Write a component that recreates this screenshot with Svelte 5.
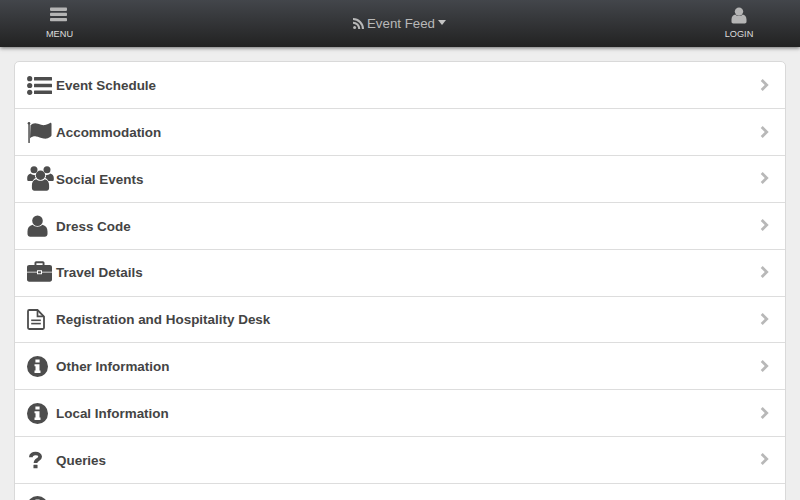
<script>
  const rows = [
    { label: 'Event Schedule', icon: 'list' },
    { label: 'Accommodation', icon: 'flag' },
    { label: 'Social Events', icon: 'group' },
    { label: 'Dress Code', icon: 'user' },
    { label: 'Travel Details', icon: 'case' },
    { label: 'Registration and Hospitality Desk', icon: 'doc' },
    { label: 'Other Information', icon: 'info' },
    { label: 'Local Information', icon: 'info' },
    { label: 'Queries', icon: 'question' },
    { label: '', icon: 'info' }
  ];
</script>

<header class="topbar">
  <button class="nav-btn">
    <svg class="menu-icon" width="17" height="15" viewBox="0 0 17 15">
      <rect y="0.500" width="17" height="3.400" rx="0.800" />
      <rect y="5.700" width="17" height="3.400" rx="0.800" />
      <rect y="10.900" width="17" height="3.400" rx="0.800" />
    </svg>
    <span>MENU</span>
  </button>

  <div class="title">
    <svg width="11" height="11" viewBox="0 0 11 11">
      <circle cx="1.600" cy="9.400" r="1.500" />
      <path d="M0 3.700v2.100a5.200 5.200 0 0 1 5.200 5.200h2.100A7.300 7.300 0 0 0 0 3.700z" />
      <path d="M0 0v2.100A8.900 8.900 0 0 1 8.900 11H11A11 11 0 0 0 0 0z" />
    </svg>
    <span>Event Feed</span>
    <i class="caret"></i>
  </div>

  <button class="nav-btn">
    <svg width="16" height="17" viewBox="0 0 16 17">
      <circle cx="8" cy="4.600" r="4.200" />
      <path d="M4.400 7.600C2.200 8.200.5 9.600.5 12.500v2.300c0 1 .8 1.700 1.700 1.700h11.600c.9 0 1.700-.7 1.700-1.700v-2.300c0-2.900-1.700-4.300-3.900-4.900-.9 1-2.100 1.500-3.600 1.500s-2.700-.5-3.600-1.500z" />
    </svg>
    <span>LOGIN</span>
  </button>
</header>

<main class="content">
  <ul class="list">
    {#each rows as row}
      <li class="row">
        <span class="icon">
          {#if row.icon === 'list'}
            <svg width="25" height="19" viewBox="0 0 25 19">
              <circle cx="2.700" cy="2.700" r="2.600" />
              <circle cx="2.700" cy="9.500" r="2.600" />
              <circle cx="2.700" cy="16.300" r="2.600" />
              <rect x="7" y="1" width="18" height="3.400" rx="0.500" />
              <rect x="7" y="7.800" width="18" height="3.400" rx="0.500" />
              <rect x="7" y="14.600" width="18" height="3.400" rx="0.500" />
            </svg>
          {:else if row.icon === 'flag'}
            <svg width="25" height="21" viewBox="0 0 25 21">
              <rect x="1.300" y="1" width="1.500" height="20" rx="0.500" />
              <circle cx="2" cy="1.300" r="1.300" />
              <path d="M3.500 3.300C5.500 1.300 8 .8 11 1.800c3 1.100 5 1.800 7 1.300 2.500-.6 4-1.500 5-2.100.8-.4 1.500 0 1.500.9v11.300c0 .7-.4 1.100-1 1.500-2.200 1.600-4.600 2.300-7 1.800-2.700-.5-5-1.900-7.500-2.100-2.200-.2-4.200.4-6 1.900z" />
            </svg>
          {:else if row.icon === 'group'}
            <svg width="27" height="25" viewBox="0 0 27 25">
              <circle cx="7" cy="3.800" r="3.500" />
              <circle cx="20" cy="3.800" r="3.500" />
              <circle cx="13.500" cy="9.300" r="4.700" />
              <path d="M3.500 7.800C1.300 8.300.2 9.800.2 12v1.500c0 1 .7 1.500 1.500 1.500h3.800c1.200-1.500 2-2.300 3.300-2.900-.6-1-1-2.100-1-3.200-.2 0-.5.100-.8.100-1.500 0-2.700-.5-3.500-1.700z" />
              <path d="M23.500 7.800c2.200.5 3.300 2 3.300 4.200v1.500c0 1-.7 1.500-1.500 1.500h-3.800c-1.200-1.500-2-2.300-3.300-2.900.6-1 1-2.100 1-3.200.2 0 .5.100.8.100 1.500 0 2.700-.5 3.500-1.700z" />
              <path d="M9.300 13.300c-3.200.7-4.400 3-4.400 6.200v2.500c0 1.500 1 2.700 2.500 2.700h12.200c1.500 0 2.500-1.200 2.500-2.700v-2.500c0-3.200-1.200-5.500-4.400-6.200-1.100 1-2.500 1.500-4.200 1.500s-3.100-.5-4.200-1.500z" />
            </svg>
          {:else if row.icon === 'user'}
            <svg width="21" height="22" viewBox="0 0 21 22">
              <circle cx="10.500" cy="5.700" r="5.300" />
              <path d="M5.600 9.700C2.200 10.500.5 12.800.5 16.500v2.500c0 1.600 1.200 2.700 2.700 2.700h14.600c1.500 0 2.700-1.100 2.700-2.700v-2.500c0-3.700-1.700-6-5.100-6.800-1.200 1.300-2.900 2-4.900 2s-3.700-.7-4.900-2z" />
            </svg>
          {:else if row.icon === 'case'}
            <svg class="case" width="25" height="21" viewBox="0 0 25 21">
              <path fill-rule="evenodd" d="M7.500 4V2c0-1 .7-1.700 1.700-1.700h6.600c1 0 1.700.7 1.700 1.700v2h5.300c1.300 0 2.200.9 2.200 2.200V10.800H15V9.300H10v1.500H0V6.200C0 4.900.9 4 2.200 4zm1.900 0h6.200V2.200H9.400z" />
              <path d="M0 11.600h10v1.700h5v-1.700h10v6.900c0 1.300-.9 2.200-2.200 2.200H2.200C.9 20.700 0 19.800 0 18.500z" />
              <rect x="11" y="10.300" width="3" height="2" />
            </svg>
          {:else if row.icon === 'doc'}
            <svg width="18" height="21" viewBox="0 0 18 21">
              <path d="M1 2.200c0-.7.500-1.200 1.200-1.200h8.300L17 7.500v11.300c0 .7-.5 1.200-1.200 1.200H2.200c-.7 0-1.200-.5-1.200-1.200z" fill="none" stroke="#4d4d4d" stroke-width="1.800" />
              <path d="M10.500 1.200v6.100h6.300" fill="none" stroke="#4d4d4d" stroke-width="1.700" />
              <rect x="4.200" y="10.500" width="9.600" height="1.600" />
              <rect x="4.200" y="13.800" width="9.600" height="1.600" />
            </svg>
          {:else if row.icon === 'info'}
            <svg width="21" height="21" viewBox="0 0 21 21">
              <path fill-rule="evenodd" d="M10.500 0a10.500 10.500 0 1 1 0 21 10.500 10.500 0 0 1 0-21zM8.400 3.500v3h4.200v-3zM7.500 8.300v2h1v4.300h-1v2.500h6v-2.500h-1V8.300z" />
            </svg>
          {:else}
            <svg class="question" width="13" height="18" viewBox="0 0 14 18">
              <path d="M2 6C2 3.200 4.200 2 7 2c2.900 0 5 1.400 5 3.600C12 8.700 7 8.400 7 12.300" fill="none" stroke="#4d4d4d" stroke-width="4" />
              <rect x="4.800" y="14" width="4.400" height="4" rx="0.500" />
            </svg>
          {/if}
        </span>
        <span class="label">{row.label}</span>
        <svg class="chevron" width="9" height="12" viewBox="0 0 9 12">
          <path d="M1.700 1l5 5-5 5" fill="none" stroke="#b8b8b8" stroke-width="2.800" />
        </svg>
      </li>
    {/each}
  </ul>
</main>

<style>
  :global(html), :global(body) {
    margin: 0;
    height: 500px;
    overflow: hidden;
    background: #eeeeee;
  }

  .topbar {
    height: 47px;
    display: grid;
    grid-template-columns: 119px 1fr 122px;
    align-items: start;
    background: linear-gradient(#43464b, #222222);
    box-shadow: 0 1px 4px rgba(0, 0, 0, 0.55);
    position: relative;
    font-family: "Liberation Sans", Arial, sans-serif;
  }

  .nav-btn {
    all: unset;
    display: flex;
    flex-direction: column;
    align-items: center;
    height: 47px;
    padding-top: 7px;
    box-sizing: border-box;
    color: #dddddd;
    font-size: 9.200px;
    line-height: 12px;
  }
  .nav-btn svg {
    fill: #b5b5b5;
  }
  .nav-btn .menu-icon {
    margin-right: 1.500px;
  }
  .nav-btn span {
    margin-top: auto;
    margin-bottom: 7px;
  }

  .title {
    display: flex;
    justify-content: center;
    align-items: center;
    gap: 3px;
    height: 47px;
    color: #b8b8b8;
    font-size: 13.300px;
    padding-left: 2px;
  }
  .title svg {
    fill: #b8b8b8;
  }
  .caret {
    width: 0;
    height: 0;
    border-left: 4.500px solid transparent;
    border-right: 4.500px solid transparent;
    border-top: 5px solid #c4c4c4;
    margin-bottom: 2px;
  }

  .content {
    padding: 14.300px 14px 14px;
  }

  .list {
    list-style: none;
    margin: 0;
    padding: 0;
    background: #ffffff;
    border: 1px solid #d9d9d9;
    border-radius: 5px;
    font-family: "Liberation Sans", Arial, sans-serif;
  }

  .row {
    display: flex;
    align-items: center;
    height: 45.850px;
    padding: 0 16px 0 12px;
    border-bottom: 1px solid #dddddd;
  }
  .row:last-child {
    border-bottom: 0;
  }

  .icon {
    width: 29px;
    display: flex;
    align-items: center;
    fill: #4d4d4d;
  }

  .case {
    margin-top: -2px;
  }

  .question {
    margin-left: 1.500px;
  }

  .chevron {
    margin-bottom: 1px;
  }

  .label {
    flex: 1;
    padding-top: 0.800px;
    font-size: 13.450px;
    font-weight: bold;
    color: #444444;
  }
</style>
